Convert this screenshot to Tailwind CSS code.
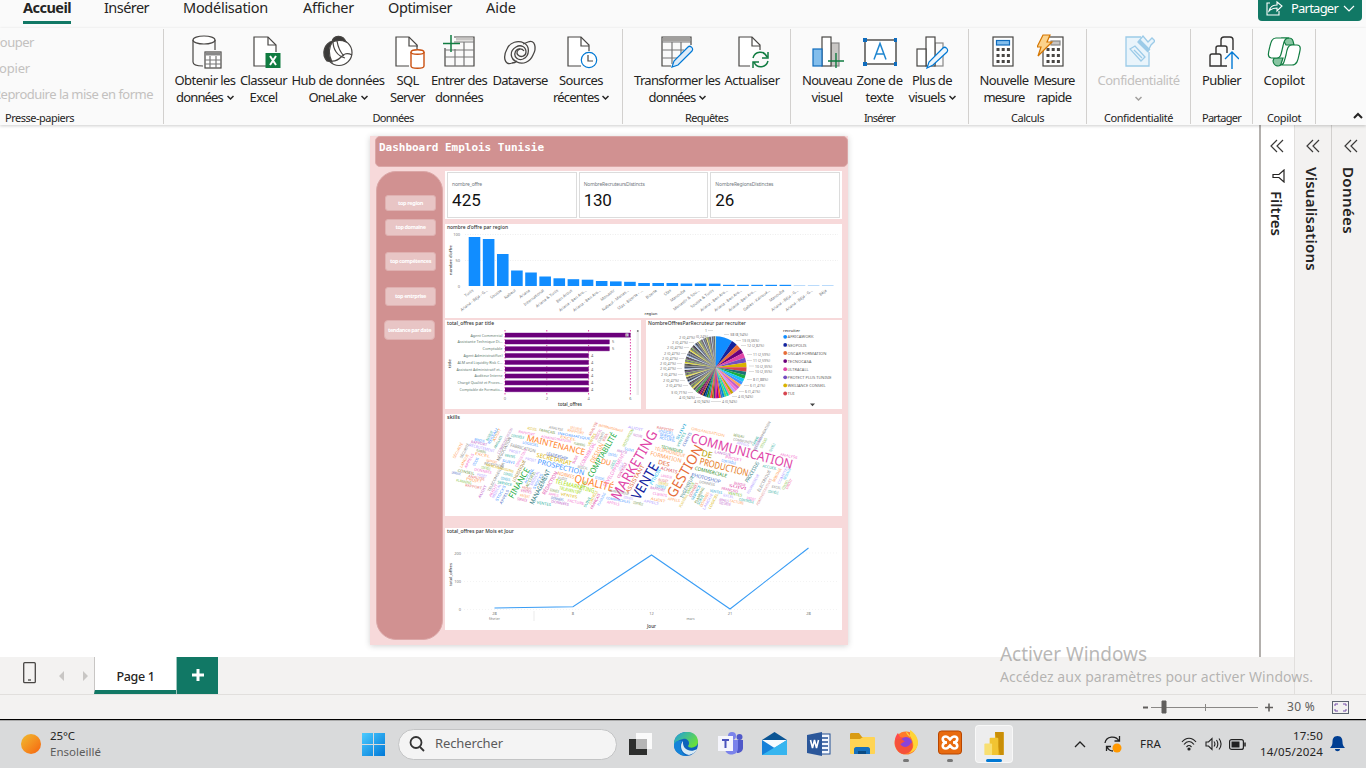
<!DOCTYPE html>
<html lang="fr">
<head>
<meta charset="utf-8">
<title>Dashboard Emplois Tunisie</title>
<script src="https://cdn.jsdelivr.net/npm/@tailwindcss/browser@4"></script>
</head>
<body class="w-[1366px] h-[768px] overflow-hidden bg-white font-['Noto_Sans',sans-serif] text-[#252423]">
<div class="relative flex h-[768px] w-[1366px] flex-col overflow-hidden">

<!-- Ribbon tabs -->
<header class="flex h-7 shrink-0 items-start justify-between bg-[#fafafa]">
  <nav class="flex pl-[23px] text-[14.5px] leading-[18px] whitespace-nowrap">
    <div class="mr-[33px] h-6 w-12 border-b-[3px] border-[#117865] font-bold"><span class="-mt-[2px] block w-fit" data-w="48">Accueil</span></div>
    <div class="mr-[34px] w-[45px]"><span class="-mt-[2px] block w-fit" data-w="45">Insérer</span></div>
    <div class="mr-[35px] w-[85px]"><span class="-mt-[2px] block w-fit" data-w="85">Modélisation</span></div>
    <div class="mr-[34px] w-[51px]"><span class="-mt-[2px] block w-fit" data-w="51">Afficher</span></div>
    <div class="mr-[33px] w-[65px]"><span class="-mt-[2px] block w-fit" data-w="64">Optimiser</span></div>
    <div><span class="-mt-[2px] block w-fit" data-w="30">Aide</span></div>
  </nav>
  <div class="mr-1 flex h-[21px] w-[104px] items-center rounded-b-[4px] bg-[#117865] pb-[5px] pl-2 text-white">
    <svg class="h-4 w-[17px]" viewBox="0 0 17 16" fill="none" stroke="#fff" stroke-width="1.1"><path d="M4 3H1v12h12v-4M3 11c1-4 4-6 8-6V2l5 4-5 5V8c-4 0-6 1-8 3z"/></svg>
    <span class="ml-2 inline-block text-[13px] leading-4" data-w="47">Partager</span>
    <svg class="ml-[5px] h-3 w-3" viewBox="0 0 12 12" fill="none" stroke="#fff" stroke-width="1.2"><path d="M1 4l5 5 5-5"/></svg>
  </div>
</header>

<!-- Ribbon -->
<section class="relative z-10 flex h-[97px] shrink-0 bg-[#fafafa] text-[13px] leading-[17px] whitespace-nowrap shadow-[0_1px_3px_rgba(0,0,0,0.2)]">
  <div class="my-[1px] flex w-[164px] flex-col border-r border-[#d2d0ce] text-[#c3c1bf]">
    <div class="h-[26px] shrink-0 pt-[5px]"><span class="-ml-[8px] inline-block" data-w="42">Couper</span></div>
    <div class="h-[26px] shrink-0 pt-[5px]"><span class="-ml-[9px] inline-block" data-w="39">Copier</span></div>
    <div class="h-[30px] shrink-0 pt-[5px]"><span class="-ml-[7px] inline-block" data-w="160">Reproduire la mise en forme</span></div>
    <div class="pl-[5px] text-[11px] leading-[13px] text-[#252423]"><span class="inline-block" data-w="69">Presse-papiers</span></div>
  </div>

  <div class="my-[1px] flex w-[459px] flex-col border-r border-[#d2d0ce]">
    <div class="flex h-[82px] shrink-0 pt-[5px] pl-2 text-center">
      <div class="flex w-[66px] flex-col items-center">
        <svg class="mb-[3px] h-[35px] w-[34px]" viewBox="0 0 34 35" fill="none" stroke="#484644" stroke-width="1.2"><path d="M5 6v22c0 2 3 4 10 4M27 6v10"/><ellipse cx="16" cy="6" rx="11" ry="4" fill="#fff"/><rect x="17" y="18" width="16" height="16" fill="#fff"/><path d="M17 20h16" stroke="#888" stroke-width="3"/><path d="M17 26h16M17 30h16M22 22v12M28 22v12" stroke="#777"/></svg>
        <span class="inline-block" data-w="61">Obtenir les</span><span class="flex items-center"><span class="inline-block" data-w="47">données</span><svg class="ml-1 size-[7px]" viewBox="0 0 7 7" fill="none" stroke="#252423" stroke-width="1.5"><path d="M.5 2l3 3 3-3"/></svg></span>
      </div>
      <div class="flex w-[51px] flex-col items-center">
        <svg class="mb-[3px] h-[35px] w-[34px]" viewBox="0 0 34 35" fill="none" stroke="#484644" stroke-width="1.2"><path d="M19 32H7V3h14l8 8v7" fill="#fff"/><path d="M21 3v8h8"/><rect x="18.500" y="19" width="15" height="15" fill="#107c41" stroke="none"/><path d="M23 22l6 9M29 22l-6 9" stroke="#fff" stroke-width="2"/></svg>
        <span class="inline-block" data-w="47">Classeur</span><span class="inline-block" data-w="28">Excel</span>
      </div>
      <div class="flex w-[98px] flex-col items-center">
        <svg class="mb-[3px] h-[35px] w-[34px]" viewBox="0 0 34 35" fill="none" stroke="#484644" stroke-width="1.2"><circle cx="18" cy="18.500" r="13" fill="#fff"/><path d="M11 8c1-7 11-8 14 0-4-2-9-2-14 0z" fill="#3b3a39"/><path d="M12 7c-9 2-12 13-6 20l5 1c-4-8-4-14 1-21z" fill="#3b3a39"/><path d="M12 7c0 8 4 15 12 17M16 7c1 6 3 11 7 15M10 27c9 1 10-6 14-7 3-1 5 0 7 1"/></svg>
        <span class="inline-block" data-w="93">Hub de données</span><span class="flex items-center"><span class="inline-block" data-w="48">OneLake</span><svg class="ml-1 size-[7px]" viewBox="0 0 7 7" fill="none" stroke="#252423" stroke-width="1.5"><path d="M.5 2l3 3 3-3"/></svg></span>
      </div>
      <div class="flex w-[41px] flex-col items-center">
        <svg class="mb-[3px] h-[35px] w-[34px]" viewBox="0 0 34 35" fill="none" stroke="#484644" stroke-width="1.2"><path d="M18 32H5V3h13l8 8v4" fill="#fff"/><path d="M18 3v9h9"/><g stroke="#ca5010" stroke-width="1.4"><path d="M20 18v14c0 3 13 3 13 0V18" fill="#fff"/><ellipse cx="26.500" cy="18" rx="6.500" ry="2.300" fill="#fff"/></g></svg>
        <span class="inline-block" data-w="22">SQL</span><span class="inline-block" data-w="35">Server</span>
      </div>
      <div class="flex w-[62px] flex-col items-center">
        <svg class="mb-[3px] h-[35px] w-[34px]" viewBox="0 0 34 35" fill="none" stroke="#484644" stroke-width="1.2"><path d="M3 14v18h29V3H12"/><path d="M14 5h17" stroke="#c8c6c4" stroke-width="3"/><path d="M12 8h20M3 16h29M3 23h29M13 15v17M22 8v24" stroke="#777"/><path d="M9 1v17M1 9.500h17" stroke="#107c41" stroke-width="1.5"/></svg>
        <span class="inline-block" data-w="56">Entrer des</span><span class="inline-block" data-w="48">données</span>
      </div>
      <div class="flex w-[60px] flex-col items-center">
        <svg class="mb-[3px] h-[35px] w-[34px]" viewBox="0 0 34 35" fill="none" stroke="#484644" stroke-width="1.3"><path d="M9 29C1 32 0 22 4 15c3-7 11-9 17-6 6 3 6 13-1 16-5 2-9-2-8-6 1-5 7-5 9-2"/><path d="M25 8c7-3 9 6 5 13-3 7-10 10-16 7C7 25 6 17 13 13c5-3 10 0 10 5 0 4-5 6-8 3-2-2-1-5 2-6"/><path d="M9 29c2 0 4-1 5-2M25 8l-5 2"/></svg>
        <span class="inline-block" data-w="55">Dataverse</span>
      </div>
      <div class="flex w-[62px] flex-col items-center">
        <svg class="mb-[3px] h-[35px] w-[34px]" viewBox="0 0 34 35" fill="none" stroke="#484644" stroke-width="1.2"><path d="M17 32H4V3h13l8 8v6" fill="#fff"/><path d="M17 3v9h8"/><circle cx="25" cy="26" r="7.700" fill="#fff" stroke="#0078d4"/><path d="M24 21v6h5"/></svg>
        <span class="inline-block" data-w="44">Sources</span><span class="flex items-center"><span class="inline-block" data-w="46">récentes</span><svg class="ml-[3px] size-[7px]" viewBox="0 0 7 7" fill="none" stroke="#252423" stroke-width="1.5"><path d="M.5 2l3 3 3-3"/></svg></span>
      </div>
    </div>
    <div class="text-center text-[11px] leading-[13px]"><span class="inline-block" data-w="41">Données</span></div>
  </div>

  <div class="my-[1px] flex w-[168px] flex-col border-r border-[#d2d0ce]">
    <div class="flex h-[82px] shrink-0 pt-[5px] pl-[9px] text-center">
      <div class="flex w-[90px] flex-col items-center">
        <svg class="mb-[3px] h-[35px] w-[34px]" viewBox="0 0 34 35" fill="none" stroke="#484644" stroke-width="1.2"><path d="M11 32H2V3h29v8"/><path d="M3 5.500h27" stroke="#a19f9d" stroke-width="3.500"/><path d="M2 8h29M2 16h22M2 24h16M12 8v22M21 8v12" stroke="#777"/><path d="M12 33l2-6L28 13c2-2 6 1 4 4L18 31z" fill="#deecf9" stroke="#0078d4"/></svg>
        <span class="inline-block" data-w="86">Transformer les</span><span class="flex items-center"><span class="inline-block" data-w="47">données</span><svg class="ml-[3px] size-[7px]" viewBox="0 0 7 7" fill="none" stroke="#252423" stroke-width="1.5"><path d="M.5 2l3 3 3-3"/></svg></span>
      </div>
      <div class="flex w-[60px] flex-col items-center">
        <svg class="mb-[3px] h-[35px] w-[34px]" viewBox="0 0 34 35" fill="none" stroke="#484644" stroke-width="1.2"><path d="M15 32H4V3h13l8 8v5" fill="#fff"/><path d="M17 3v9h8"/><g stroke="#107c41" stroke-width="1.5"><path d="M18 24c2-7 11-8 14-1M33 18v6h-6M33 27c-2 7-11 8-14 1M18 34v-6h6"/></g></svg>
        <span class="inline-block" data-w="55">Actualiser</span>
      </div>
    </div>
    <div class="text-center text-[11px] leading-[13px]"><span class="inline-block" data-w="43">Requêtes</span></div>
  </div>

  <div class="my-[1px] flex w-[178px] flex-col border-r border-[#d2d0ce]">
    <div class="flex h-[82px] shrink-0 pt-[5px] pl-2 text-center">
      <div class="flex w-[56px] flex-col items-center">
        <svg class="mb-[3px] h-[35px] w-[34px]" viewBox="0 0 34 35" fill="none" stroke="#484644" stroke-width="1.2"><rect x="21" y="9" width="8" height="23" fill="#c8c6c4" stroke="#888"/><rect x="12" y="3" width="9" height="29" fill="#fff"/><rect x="3" y="15" width="9" height="17" fill="#83beec" stroke="#0f6cbd"/><path d="M26 19v15M18 27h16" stroke="#107c41" stroke-width="1.400"/></svg>
        <span class="inline-block" data-w="50">Nouveau</span><span class="inline-block" data-w="31">visuel</span>
      </div>
      <div class="flex w-[49px] flex-col items-center">
        <svg class="mb-[3px] h-[35px] w-[34px]" viewBox="0 0 34 35" fill="none" stroke="#484644" stroke-width="1.4"><rect x="2" y="6" width="31" height="24" fill="#fff"/><g fill="#0f6cbd" stroke="none"><path d="M0 4h4v4H0zM31 4h4v4h-4zM0 28h4v4H0zM31 28h4v4h-4z"/></g><path d="M11 25.500l6-16 6 16M13 20h8" stroke="#1f86d0" stroke-width="1.5"/></svg>
        <span class="inline-block" data-w="46">Zone de</span><span class="inline-block" data-w="28">texte</span>
      </div>
      <div class="flex w-[56px] flex-col items-center">
        <svg class="mb-[3px] h-[35px] w-[34px]" viewBox="0 0 34 35" fill="none" stroke="#484644" stroke-width="1.2"><rect x="20" y="9" width="8" height="23" stroke="#888"/><rect x="11" y="3" width="9" height="29" fill="#fff"/><rect x="2" y="15" width="9" height="17" fill="#fff"/><path d="M12 34l2-6L28 14c2-2 6 1 4 4L18 31z" fill="#eef6fc" stroke="#0078d4"/></svg>
        <span class="inline-block" data-w="40">Plus de</span><span class="flex items-center"><span class="inline-block" data-w="37">visuels</span><svg class="ml-[3px] size-[7px]" viewBox="0 0 7 7" fill="none" stroke="#252423" stroke-width="1.5"><path d="M.5 2l3 3 3-3"/></svg></span>
      </div>
    </div>
    <div class="text-center text-[11px] leading-[13px]"><span class="inline-block" data-w="31">Insérer</span></div>
  </div>

  <div class="my-[1px] flex w-[118px] flex-col border-r border-[#d2d0ce]">
    <div class="flex h-[82px] shrink-0 pt-[5px] pl-2 text-center">
      <div class="flex w-[54px] flex-col items-center">
        <svg class="mb-[3px] h-[35px] w-[34px]" viewBox="0 0 34 35" fill="none" stroke="#484644" stroke-width="1.2"><rect x="6" y="3" width="20" height="29" fill="#fff"/><rect x="9.500" y="6.500" width="13" height="4.500" fill="#83beec" stroke="#0f6cbd"/><path d="M9.500 15.500h14M9.500 21.500h14M9.500 27.500h14" stroke-width="3" stroke-dasharray="3 2.200"/></svg>
        <span class="inline-block" data-w="49">Nouvelle</span><span class="inline-block" data-w="41">mesure</span>
      </div>
      <div class="flex w-[46px] flex-col items-center">
        <svg class="mb-[3px] h-[35px] w-[34px]" viewBox="0 0 34 35" fill="none" stroke="#484644" stroke-width="1.2"><rect x="6" y="3" width="20" height="29" fill="#fff"/><rect x="14" y="7" width="9" height="4" fill="#c8c6c4" stroke="#888"/><path d="M9.500 15.500h14M9.500 21.500h14M9.500 27.500h14" stroke-width="3" stroke-dasharray="3 2.200"/><path d="M6 1h7l-3 7h5L1 22l3-9H0z" fill="#fbd28b" stroke="#d47500"/></svg>
        <span class="inline-block" data-w="41">Mesure</span><span class="inline-block" data-w="35">rapide</span>
      </div>
    </div>
    <div class="text-center text-[11px] leading-[13px]"><span class="inline-block" data-w="33">Calculs</span></div>
  </div>

  <div class="my-[1px] flex w-[104px] flex-col items-center border-r border-[#d2d0ce] pt-[5px]">
    <div class="flex h-[77px] shrink-0 flex-col items-center text-[#c3c1bf]">
      <svg class="mb-[3px] h-[35px] w-[34px]" viewBox="0 0 34 35" fill="none" stroke="#9ccbe8" stroke-width="1.3"><path d="M20 3H5v29h23V18" fill="#e9f4fb"/><path d="M9 15l5-3 10 11-4 4zM13 16l8 8" fill="#e9f4fb"/><path d="M17 8l5-6 5 6 4-4 3 3-4 4-3 6z" fill="#e9f4fb"/><path d="M18 7l10 10" stroke-width="4"/></svg>
      <span class="inline-block" data-w="82">Confidentialité</span>
      <svg class="mt-[6px] size-[7px]" viewBox="0 0 7 7" fill="none" stroke="#a19f9d" stroke-width="1.5"><path d="M.5 2l3 3 3-3"/></svg>
    </div>
    <div class="text-[11px] leading-[13px]"><span class="inline-block" data-w="69">Confidentialité</span></div>
  </div>

  <div class="my-[1px] flex w-[62px] flex-col items-center border-r border-[#d2d0ce] pt-[5px]">
    <div class="flex h-[77px] shrink-0 flex-col items-center">
      <svg class="mb-[3px] h-[35px] w-[34px]" viewBox="0 0 34 35" fill="none" stroke="#323130" stroke-width="1.4"><path d="M22 32H5V22c0-1 1-2 2-2h7c1 0 2 1 2 2v10"/><path d="M11 20v-6c0-2 1-2 2-2h7c2 0 2 1 2 2v5M16 12V6c0-2 1-3 3-3h6c2 0 3 1 3 3v10"/><path d="M27 35V19M20 25l7-7 7 7" stroke="#0078d4"/></svg>
      <span class="inline-block" data-w="39">Publier</span>
    </div>
    <div class="text-[11px] leading-[13px]"><span class="inline-block" data-w="39">Partager</span></div>
  </div>

  <div class="my-[1px] flex w-[63px] flex-col items-center border-r border-[#d2d0ce] pt-[5px]">
    <div class="flex h-[77px] shrink-0 flex-col items-center">
      <svg class="mb-[3px] h-[35px] w-[34px]" viewBox="0 0 34 35" fill="none" stroke="#107c41" stroke-width="1.2"><path d="M15 4h7c4 0 4 3 5 7h-8z" fill="#88c5a2"/><path d="M7 24h9l-2 6c-1 3-7 3-8-3z" fill="#88c5a2"/><path d="M20 4H9C5 4 4 8 3 12c-1 5-4 12 2 12h5c4 0 4-4 6-12 1-5 2-8 6-8z" fill="#fff"/><path d="M13 31h12c5 0 6-5 7-10 1-4 3-10-2-10h-5c-4 0-5 4-6 10-2 7-2 10-6 10z" fill="#fff"/></svg>
      <span class="inline-block" data-w="41">Copilot</span>
    </div>
    <div class="text-[11px] leading-[13px]"><span class="inline-block" data-w="34">Copilot</span></div>
  </div>
  <div class="flex flex-1 items-end justify-end pr-[3px] pb-[5px]">
    <svg class="h-[9px] w-[10px]" viewBox="0 0 10 9" fill="none" stroke="#252423" stroke-width="2"><path d="M1 7l4-4 4 4"/></svg>
  </div>
</section>

<!-- Work area -->
<section class="flex h-[569px] shrink-0">
  <div class="flex w-[1294px] flex-col">
    <div class="flex h-[532px] shrink-0">
      <main class="flex-1 pt-[11px] pl-[370px]">
        <!-- Report page -->
        <div class="h-[509px] w-[478px] bg-[#f7d9da] shadow-[0_1px_6px_rgba(0,0,0,0.18)]">
          <div class="ml-[5px] h-[31px] rounded-[5px] border border-[#dba7a7] bg-[#d19191] pt-[3px] pl-[3px] font-['DejaVu_Sans_Mono',monospace] text-[11px] leading-[15px] font-bold text-white"><span class="inline-block" data-w="165">Dashboard Emplois Tunisie</span></div>
          <div class="mt-1 flex">
            <aside class="ml-[6px] flex h-[469px] w-[67px] flex-col items-center rounded-[20px] border border-[#dba7a7] bg-[#d19191] pt-[23px] pl-[2px] text-[5.500px] font-bold whitespace-nowrap text-white">
              <div class="flex h-4 w-[51px] items-center justify-center rounded-[3px] border border-[#dfb1b1] bg-[#e8c5c5]"><span class="inline-block" data-w="25">top region</span></div>
              <div class="mt-2 flex h-[17px] w-[51px] items-center justify-center rounded-[3px] border border-[#dfb1b1] bg-[#e8c5c5]"><span class="inline-block" data-w="30">top domaine</span></div>
              <div class="mt-4 flex h-[19px] w-[51px] items-center justify-center rounded-[3px] border border-[#dfb1b1] bg-[#e8c5c5]"><span class="inline-block" data-w="41">top compétences</span></div>
              <div class="mt-4 flex h-[19px] w-[51px] items-center justify-center rounded-[3px] border border-[#dfb1b1] bg-[#e8c5c5]"><span class="inline-block" data-w="31">top entrprise</span></div>
              <div class="mt-[14px] mr-[2px] flex h-5 w-[51px] items-center justify-center rounded-[4px] border border-[#dfb1b1] bg-[#e8c5c5]"><span class="inline-block" data-w="43">tendance par date</span></div>
            </aside>
            <div class="ml-[2px] w-[397px]">
              <div class="flex h-[48px] gap-[2px] bg-white py-[1px] pr-[2px] pl-[2px] whitespace-nowrap">
                <div class="flex-1 border border-[#dcdcdc] pl-1"><div class="mt-[8px] text-[5px] leading-[7px] text-[#71787e]"><span class="block w-fit" data-w="30">nombre_offre</span></div><div class="mt-[3px] font-[Roboto,sans-serif] text-[17px] leading-[19px] text-[#111]"><span class="block w-fit" data-w="29">425</span></div></div>
                <div class="flex-1 border border-[#dcdcdc] pl-1"><div class="mt-[8px] text-[5px] leading-[7px] text-[#71787e]"><span class="block w-fit" data-w="61">NombreRecruteursDistincts</span></div><div class="mt-[3px] font-[Roboto,sans-serif] text-[17px] leading-[19px] text-[#111]"><span class="block w-fit" data-w="28">130</span></div></div>
                <div class="flex-1 border border-[#dcdcdc] pl-1"><div class="mt-[8px] text-[5px] leading-[7px] text-[#71787e]"><span class="block w-fit" data-w="58">NombreRegionsDistinctes</span></div><div class="mt-[3px] font-[Roboto,sans-serif] text-[17px] leading-[19px] text-[#111]"><span class="block w-fit" data-w="19">26</span></div></div>
              </div>
              <svg id="regions" class="mt-[5px] h-[94px] w-[397px] bg-white" viewBox="445 224 397 94"></svg>
              <div class="mt-[2px] flex justify-between">
                <svg id="titles" class="h-[89px] w-[196px] bg-white" viewBox="445 320 196 89"></svg>
                <svg id="recruiters" class="h-[89px] w-[196px] bg-white" viewBox="646 320 196 89"></svg>
              </div>
              <svg id="skills" class="mt-[5px] h-[102px] w-[397px] bg-white" viewBox="445 414 397 102"></svg>
              <svg id="days" class="mt-3 h-[102px] w-[397px] bg-white" viewBox="445 528 397 102"></svg>
            </div>
          </div>
        </div>
      </main>
      <aside class="flex w-[35px] flex-col items-center border-l-2 border-[#b3b0ad] bg-white">
        <svg class="mt-[14px] mr-[2px] h-[14px] w-[14px]" viewBox="0 0 14 14" fill="none" stroke="#3b3a39" stroke-width="1.2"><path d="M7 1L1 7l6 6M13 1L7 7l6 6"/></svg>
        <svg class="mt-4 ml-[2px] h-[14px] w-[13px]" viewBox="0 0 13 14" fill="none" stroke="#252423" stroke-width="1.2"><path d="M12 1v12L7 8.500H1v-3h6z"/></svg>
        <span class="mt-[8px] mr-[2px] text-[15px] leading-5 font-semibold [writing-mode:vertical-rl]" data-h="45">Filtres</span>
      </aside>
    </div>
    <div class="flex h-[37px] shrink-0 bg-[#f3f2f1]">
      <svg class="mt-[5px] ml-[23px] h-[22px] w-[13px]" viewBox="0 0 13 22" fill="none" stroke="#484644" stroke-width="1.3"><rect x=".7" y=".7" width="11.600" height="20" rx="1"/><path d="M5 18h3"/></svg>
      <svg class="mt-[14px] ml-[23px] h-[10px] w-[29px]" viewBox="0 0 29 10" fill="#c8c6c4"><path d="M5 0v10L0 5zM24 0v10l5-5z"/></svg>
      <div class="ml-[6px] flex h-[37px] w-[82px] justify-center border-b-4 border-l border-[#117865] border-l-[#c8c6c4] bg-white pt-[10px] text-[12.500px] leading-[20px] font-medium"><span class="inline-block" data-w="38">Page 1</span></div>
      <div class="flex h-[37px] w-[42px] items-center justify-center border-l border-[#9cc6bd] bg-[#117865]"><svg class="mb-[2px] h-[12px] w-[12px]" viewBox="0 0 12 12" stroke="#fff" stroke-width="3"><path d="M6 0v12M0 6h12"/></svg></div>
    </div>
  </div>
  <aside class="flex w-[37px] flex-col items-center border-l border-[#e1dfdd] bg-[#f3f2f1]">
    <svg class="mt-[14px] h-[14px] w-[14px]" viewBox="0 0 14 14" fill="none" stroke="#3b3a39" stroke-width="1.2"><path d="M7 1L1 7l6 6M13 1L7 7l6 6"/></svg>
    <span class="mt-[14px] mr-[3px] text-[15px] leading-5 font-semibold [writing-mode:vertical-rl]" data-h="104">Visualisations</span>
  </aside>
  <aside class="flex w-[35px] flex-col items-center border-l border-[#d2d0ce] bg-[#f3f2f1]">
    <svg class="mt-[14px] ml-[3px] h-[14px] w-[14px]" viewBox="0 0 14 14" fill="none" stroke="#3b3a39" stroke-width="1.2"><path d="M7 1L1 7l6 6M13 1L7 7l6 6"/></svg>
    <span class="mt-[14px] text-[15px] leading-5 font-semibold [writing-mode:vertical-rl]" data-h="67">Données</span>
  </aside>
</section>

<!-- Status bar -->
<section class="flex h-[25px] shrink-0 items-center justify-end border-t border-[#e1dfdd] bg-[#f3f2f1] pr-[17px] text-[12px] text-[#605e5c]">
  <svg class="h-[14px] w-[132px]" viewBox="0 0 132 14" stroke="#605e5c"><path d="M1 7.500h5" stroke-width="2"/><path d="M9 7.500h107" stroke="#8a8886"/><path d="M20 1h4v12h-4z" fill="#605e5c"/><path d="M63.500 4v7" stroke="#8a8886"/><path d="M123 7.500h8M127 3.500v8" stroke-width="1.600"/></svg>
  <span class="ml-[13px] inline-block" data-w="28">30 %</span>
  <svg class="ml-[17px] h-[13px] w-[17px]" viewBox="0 0 17 13" fill="none" stroke="#5c6470"><rect x=".5" y=".5" width="16" height="12"/><path d="M3 5V3h3M11 3h3v2M14 8v2h-3M6 10H3V8" stroke="#744da9"/></svg>
</section>

<!-- Taskbar -->
<footer class="flex h-[49px] shrink-0 items-center border-t border-black bg-[#d9dadb] shadow-[inset_0_1px_0_#aaa]">
  <div class="ml-[21px] size-5 rounded-full bg-linear-to-br from-[#eebb30] to-[#f5600c]"></div>
  <div class="ml-[9px] w-[312px] text-[11.500px] leading-[16px]"><span class="block w-fit" data-w="25">25°C</span><span class="block w-fit text-[#5c5c5c]" data-w="51">Ensoleillé</span></div>
  <svg class="h-[23px] w-[23px]" viewBox="0 0 23 23"><defs><linearGradient id="win" x2="1" y2="1"><stop stop-color="#4ccbff"/><stop offset="1" stop-color="#0078d7"/></linearGradient></defs><path d="M0 0h11v11H0zM12 0h11v11H12zM0 12h11v11H0zM12 12h11v11H12z" fill="url(#win)"/></svg>
  <div class="ml-[13px] flex h-[31px] w-[219px] items-center rounded-full border border-[#c3c4c5] bg-[#f4f4f4] pl-[10px] text-[13px] text-[#5b5b5b]">
    <svg class="h-[16px] w-[16px]" viewBox="0 0 16 16" fill="none" stroke="#333" stroke-width="1.800"><circle cx="7" cy="6.500" r="5.500"/><path d="M11 11l4 4"/></svg>
    <span class="ml-[10px] inline-block" data-w="68">Rechercher</span>
  </div>
  <svg class="ml-[12px] h-[24px] w-[24px]" viewBox="0 0 24 24"><rect x="0" y="7" width="18" height="16" fill="#2d2e2d"/><rect x="7" y="1" width="16" height="16" fill="#fafafa"/><rect x="7" y="7" width="11" height="10" fill="#b5b5b5"/></svg>
  <svg class="ml-[21px] h-[24px] w-[24px]" viewBox="0 0 24 24"><defs><linearGradient id="edge" x2="1" y2=".6"><stop stop-color="#1d9ce5"/><stop offset="1" stop-color="#68e03a"/></linearGradient></defs><circle cx="12" cy="12" r="12" fill="#0d62bb"/><path d="M0 10C2-3 24-4 24 10c0 6-9 7-10 4 3-4-1-8-5-7C4 8 1 11 0 15z" fill="url(#edge)"/><path d="M9 9c-4 4-2 13 6 14 4-1 7-3 8-6-6 4-15 1-14-8z" fill="#d9eaf5"/><path d="M8 9c-3 4-2 13 6 15C4 24-1 18 0 12c2-4 6-4 8-3z" fill="#1583d8"/></svg>
  <svg class="ml-5 h-[24px] w-[25px]" viewBox="0 0 25 24"><circle cx="14" cy="4" r="4" fill="#7b83eb"/><circle cx="21.500" cy="5" r="3" fill="#5059c9"/><path d="M14 8h11v8c0 3-3 5-6 5z" fill="#5059c9"/><path d="M7 8h13v8c0 9-13 8-13 1z" fill="#7b83eb"/><rect x="0" y="4" width="15" height="15" fill="#f5f5fc"/><path d="M4 8h7M7.500 8v8" stroke="#4b53bc" stroke-width="2"/></svg>
  <svg class="ml-[19px] h-[24px] w-[25px]" viewBox="0 0 25 24"><path d="M0 8l12.500-8L25 8z" fill="#0b5594"/><path d="M0 8h25L12.500 18z" fill="#f7fbff"/><path d="M0 8v15h25V8L12.500 16z" fill="#1681d9"/><path d="M0 23h25V8z" fill="#36b5ef"/><path d="M3 8h19l-9.500 7z" fill="#f7fbff"/></svg>
  <svg class="ml-5 h-[24px] w-[24px]" viewBox="0 0 24 24"><rect x="12" y="2" width="11" height="20" fill="#f3f7fd" stroke="#234f94"/><path d="M13 6h8M13 10h8M13 14h8M13 18h8" stroke="#234f94" stroke-width="1.300"/><path d="M0 3l15-3v24L0 21z" fill="#2b579a"/><path d="M3.500 8l2 8 2-8 2 8 2-8" stroke="#fff" stroke-width="1.600" fill="none"/></svg>
  <svg class="ml-[19px] h-[24px] w-[25px]" viewBox="0 0 25 24"><path d="M0 2c0-1 1-1 2-1h7l3 4h12v9H0z" fill="#d99b12"/><path d="M0 7h10l3-2h11c1 0 1 1 1 1v15c0 1-1 1-1 1H1c-1 0-1-1-1-1z" fill="#ffd454"/><path d="M4 22v-5c0-1 1-2 2-2h12c1 0 2 1 2 2v5z" fill="#1670bd"/><path d="M8 22v-3h8v3z" fill="#0a4b84"/></svg>
  <svg class="ml-[19px] mt-[4px] h-[38px] w-[24px]" viewBox="0 0 24 38"><circle cx="12" cy="16" r="11.500" fill="#ff7a2c"/><path d="M12 4c0 2 1 4 4 6V3c8 5 10 13 6 19-4 4-7 4-7 4 7-6 5-13-3-22z" fill="#ffd436"/><path d="M1 14c0-5 3-8 3-8l2 4 6 1c6 4 6 13-1 15C5 27 0 20 1 14z" fill="#ff4b4b"/><circle cx="12" cy="16" r="6" fill="#8a43d8"/><path d="M2 12c4-1 7 0 9 3-3 0-3 2-5 2 4 5 10 3 11-2 5 7-3 12-7 12C4 27 0 20 2 12z" fill="#f5513a"/><rect x="9" y="32" width="6" height="3" rx="1.500" fill="#777"/></svg>
  <svg class="ml-5 mt-[4px] h-[38px] w-[24px]" viewBox="0 0 24 38"><rect x=".5" y="4" width="23" height="23" rx="3" fill="#e86b10" stroke="#b84600"/><path d="M8 9.500c-5 0-4 6 1 6-5 0-6 6-1 6 2 0 3-2 4-3 1 1 2 3 4 3 5 0 4-6-1-6 5 0 6-6 1-6-2 0-3 2-4 3-1-1-2-3-4-3z" fill="none" stroke="#fff" stroke-width="2.600"/><rect x="9" y="32" width="6" height="3" rx="1.500" fill="#777"/></svg>
  <div class="ml-[13px] flex h-[38px] w-[38px] flex-col items-center rounded-[4px] border border-white/60 bg-[#ededee]">
    <svg class="mt-[6px] h-[24px] w-[20px]" viewBox="0 0 20 24"><rect x="11" y="0" width="9" height="24" rx="1" fill="#e5ad16"/><path d="M11 0h9v24h-4z" fill="#c98e07"/><rect x="5.500" y="6" width="9" height="18" rx="1" fill="#f1c432"/><rect x="0" y="12" width="8" height="12" rx="1" fill="#f8df72"/></svg>
    <div class="mt-[4px] h-[3px] w-4 rounded-full bg-[#0078d4]"></div>
  </div>
  <svg class="ml-[61px] h-[9px] w-[12px]" viewBox="0 0 12 9" fill="none" stroke="#222" stroke-width="1.300"><path d="M1 7l5-5 5 5"/></svg>
  <svg class="ml-[18px] h-[18px] w-[18px]" viewBox="0 0 18 18" fill="none" stroke="#222" stroke-width="1.300"><path d="M1 8c1-7 11-8 14-2M15.500 1v5h-5M9 16c-3 0-5-2-6-4M2.500 16v-4.500H7"/><circle cx="13" cy="13" r="4.500" fill="#ff9800" stroke="none"/></svg>
  <div class="ml-[18px] w-[21px] text-[11.500px]"><span class="block w-fit" data-w="21">FRA</span></div>
  <svg class="ml-[20px] h-[14px] w-[16px]" viewBox="0 0 16 14" fill="none" stroke="#222" stroke-width="1.200"><path d="M1 5c4-5 10-5 14 0M3 7.500c3-4 7-4 10 0M5.500 10c2-2 3-2 5 0"/><circle cx="8" cy="12" r="1" fill="#222"/></svg>
  <svg class="ml-[8px] h-[14px] w-[17px]" viewBox="0 0 17 14" fill="none" stroke="#222" stroke-width="1.100"><path d="M1 5h2.500L7 1.500v11L3.500 9H1zM9 4.500c1.500 2 1.500 3 0 5M11.500 3c2 3 2 5 0 8M14 1.500c3 4 3 7 0 11"/></svg>
  <svg class="ml-[7px] h-[11px] w-[17px]" viewBox="0 0 17 11"><rect x=".6" y=".6" width="13.800" height="9.800" rx="2" fill="none" stroke="#222" stroke-width="1.200"/><rect x="2.500" y="2.500" width="8" height="6" fill="#222"/><path d="M16 3.500v4" stroke="#222" stroke-width="1.500"/></svg>
  <div class="ml-auto flex w-[63px] flex-col items-end text-[11.500px] leading-[16px]"><span class="inline-block" data-w="30">17:50</span><span class="inline-block" data-w="63">14/05/2024</span></div>
  <svg class="mr-[21px] ml-[7px] h-[16px] w-[15px]" viewBox="0 0 15 16" fill="#003e92"><path d="M7.500 0c-4 0-5 3-5 6 0 3-1 4-2.500 6h15c-1.500-2-2.500-3-2.500-6 0-3-1-6-5-6zM5 13h5c0 3-5 3-5 0z"/></svg>
</footer>

<!-- Activation notice floating above the windows -->
<div class="pointer-events-none absolute top-[641px] left-[1000px] z-20 whitespace-nowrap text-[#8a8886]/60">
  <div class="text-[19px] leading-[26px]"><span class="block w-fit" data-w="147">Activer Windows</span></div>
  <div class="text-[14px] leading-[19px]"><span class="block w-fit" data-w="313">Accédez aux paramètres pour activer Windows.</span></div>
</div>
</div>

<script>
const esc = s => s.replace(/&/g, '&amp;');
// Text: x, y baseline, string, size, colour, anchor, rotation, width, weight
function T(x, y, s, size = 4, fill = '#777', a = 'start', r = 0, w = 0, b = 400) {
  return `<text x="${x}" y="${y}" font-size="${size}" fill="${fill}" font-weight="${b}" text-anchor="${a}"${r ? ` transform="rotate(${r} ${x} ${y})"` : ''}${w ? ` textLength="${w}" lengthAdjust="spacingAndGlyphs"` : ''}>${esc(s)}</text>`;
}
const R = (x, y, w, h, f) => `<rect x="${x}" y="${y}" width="${w}" height="${h}" fill="${f}"/>`;
const L = (x1, y1, x2, y2, c, d = '', w = 0.6) => `<line x1="${x1}" y1="${y1}" x2="${x2}" y2="${y2}" stroke="${c}" stroke-width="${w}"${d ? ` stroke-dasharray="${d}"` : ''}/>`;
const put = (id, s) => document.getElementById(id).innerHTML = s;

// Offers by region
{
  const v = [49,47,32,15.5,13.5,9.5,7.7,6.8,6.3,5,4.6,4.2,3,3,3,2.5,2.5,2.4,1.2,1.2,1.2,1.2,1.2,.8,.8,.8];
  const n = ['Tunis','Ariana - Béja - G...','Sousse','Nabeul','Ariana','International','Ariana & Tunis','Ben Arous','Ariana - Ben Aro...','Ariana - Ben Aro...','Monastir','Nabeul - Monas...','Sfax - Bizerte - ...','Bizerte','Sfax','Manouba','Monastir & Sou...','Sousse & Tunis','Ariana - Ben Aro...','Ariana - Ben Aro...','Ariana - Ben Aro...','Gabès - Kairoua...','Manouba','Ariana - Béja - G...','Ariana - Béja - G...','Béja'];
  let s = T(447, 229, "nombre d'offre par region", 5.2, '#333', 'start', 0, 61, 500);
  s += L(465, 234.500, 838, 234.500, '#e3e3e3', '1 1.5') + L(465, 260.500, 838, 260.500, '#e3e3e3', '1 1.5');
  s += T(460, 236, '100', 4, '#777', 'end') + T(460, 262, '50', 4, '#777', 'end') + T(460, 288, '0', 4, '#777', 'end');
  s += T(451.5, 275, "nombre d'offre", 4.2, '#444', 'start', -90, 30, 500) + T(651, 315, 'region', 4.2, '#444', 'middle', 0, 13, 500);
  n.forEach((t, i) => {
    const x = 468.7 + i * 14.13, c = i > 22 ? '#a9d3fb' : '#118dff';
    s += R(x, 286 - v[i], 11.6, v[i], c) + T(x + 5, 291, t, 4, '#6f7478', 'end', -38);
  });
  put('regions', s);
}

// Offers by title
{
  const d = [['Agent Commercial',6],['Assistante Technique Di...',5],['Comptable',5],['Agent Administratif(ve)',4],['ALM and Liquidity Risk C...',4],['Assistant Administratif et...',4],['Auditeur Interne',4],['Chargé Qualité et Proces...',4],['Comptable de Formatio...',4]];
  const w = [32,45,20,39,45,46,28,45,43];
  let s = T(447, 325, 'total_offres par title', 5.2, '#333', 'start', 0, 47, 500);
  s += R(636.5, 330, 2.5, 65, '#ededed') + R(637, 330, 1.5, 2, '#888');
  [0,2,4,6].forEach(k => { const x = 505 + k * 20.9; s += L(x, 330, x, 395, '#e044a7', '1.5 1.5', 1) + T(x, 400, String(k), 4, '#777', 'middle'); });
  d.forEach(([t, k], i) => {
    const y = 332.5 + i * 6.82;
    s += R(505, y, k * 20.9, 5.2, '#c49bd0') + R(505, y + .5, k * 20.9, 4.2, '#6b007b');
    s += T(502.5, y + 4, t, 4, '#5d7a70', 'end', 0, w[i]);
    s += k == 6 ? R(625.5, y + 1, 3, 3, '#eee') + T(626, y + 4, '6', 3.6, '#444') : T(505 + k * 20.9 + 2.5, y + 4, String(k), 4, '#666');
  });
  s += T(451, 368, 'title', 4.2, '#333', 'start', -90, 9, 500) + T(570, 406, 'total_offres', 4.4, '#333', 'middle', 0, 24, 500);
  put('titles', s);
}

// Offers by recruiter
{
  const cx = 715.5, cy = 367.3, r = 31;
  const col = ['#118dff','#12239e','#e66c37','#6b007b','#e044a7','#744ec2','#d9b300','#d64550','#197278','#1aab40','#15c6f4','#4092ff','#ffa058','#be5dc9','#f472d0','#b5a1ff','#c4a200','#ff8080','#00dbbc','#5bd667','#0091d5','#4668c5','#ff6300','#99008a','#ec008c','#533285','#99700a','#ff4141','#1f9a85','#25891c','#0057a2','#002050','#c94f0f','#450f54','#b60064','#34124f','#6a5a29','#1aab40'];
  const sizes = [38,13,12,11,11,11,10,10,8,8,8,7,6,6,6,6,6,5,5,5,5,4,4,4,4,4,4,4,4,4,4,4,3,3,3,3,3,3];
  const dark = ['#555','#c9c400','#333','#8b8fa3','#1b2a4a','#d5dbe8','#444','#7dbe3a','#6b6b6b','#e9e27a','#3b3a39','#4a4a4a','#8aa3d0','#222','#5b2b83'];
  let used = sizes.reduce((a, b) => a + b, 0);
  while (used < 424) { const k = used > 380 ? 1.3 : 2; sizes.push(k); used += k; }
  const total = sizes.reduce((a, b) => a + b, 0);
  let a = 0, s = T(648, 325, 'NombreOffresParRecruteur par recruiter', 5.2, '#333', 'start', 0, 98, 500);
  sizes.forEach((k, i) => {
    const b = a + k / total * 2 * Math.PI, p = t => (cx + r * Math.sin(t)).toFixed(2) + ' ' + (cy - r * Math.cos(t)).toFixed(2);
    s += `<path d="M${cx} ${cy}L${p(a)}A${r} ${r} 0 0 1 ${p(b)}Z" fill="${i < col.length ? col[i] : dark[i * 7 % dark.length]}"/>`;
    a = b;
  });
  [[730,336,'38 (8,94%)',18],[742,342,'13 (3,06%)',17],[747,347,'12 (2,82%)',17],[753,356,'11 (2,59%)',17],[753,362,'11 (2,59%)',17],[755,367.5,'10 (2,35%)',17],[755,373,'10 (2,35%)',17],[753,381,'8 (1,88%)',15],[750,387,'6 (1,41%)',15],[745,393,'6 (1,41%)',15],[738,398,'4 (0,94%)',15],[722,403,'4 (0,94%)',15]].forEach(q => s += T(q[0], q[1], q[2], 4, '#777', 'start', 0, q[3]) + L(q[0] - 6, q[1] - 1.5, q[0] - 1, q[1] - 1.5, '#bbb', '', .5));
  [[707,332,'1',2],[708,337.5,'(0,24%)',12],[695,339,'2 (0,47%)',16],[688,344,'2 (0,47%)',16],[683,349,'2 (0,47%)',16],[680,355,'2 (0,47%)',16],[678,360,'2 (0,47%)',16],[676,365,'2 (0,47%)',16],[676,370,'2 (0,47%)',16],[677,376,'2 (0,47%)',16],[679,382,'2 (0,47%)',16],[682,387,'2 (0,47%)',16],[687,394,'3 (0,71%)',16],[695,399,'4 (0,94%)',16],[710,403,'4 (0,94%)',16]].forEach((q, i) => s += T(q[0], q[1], q[2], 4, '#777', 'end', 0, q[3]) + (i == 1 || i == 2 ? '' : L(q[0] + 1, q[1] - 1.5, q[0] + 6, q[1] - 1.5, '#bbb', '', .5)));
  s += T(783, 332, 'recruiter', 4.2, '#444', 'start', 0, 17, 500);
  [['AFRICAWORK',26],['NEOPOLIS',19],['OSCAR FORMATION',39],['TECNOCASA',24],['ULTRACALL',21],['PROTECT PLUS TUNISIE',44],['WEILIANCE CONSEIL',38],['TUI',7]].forEach((q, i) => s += `<circle cx="785.200" cy="${336.8 + i * 8.1}" r="1.900" fill="${col[i]}"/>` + T(787.5, 338.4 + i * 8.1, q[0], 4.2, '#666', 'start', 0, q[1]));
  s += '<path d="M810 403.500h5l-2.500 2.700z" fill="#444"/>';
  put('recruiters', s);
}

// Skills word cloud: text, centre x, centre y, length, angle, size, colour
{
  const W = [
    ['COMMUNICATION',742,451,105,15,13,'#e044a7'],['MARKETING',634,465,78,-60,14,'#e044a7'],['GESTION',685,471,58,-60,14,'#e66c37'],['VENTE',645,481,40,-60,14,'#12239e'],
    ['MAINTENANCE',556,445,60,14,8.500,'#ff7f2a'],['QUALITÉ',594,483,40,14,10.500,'#ff7f2a'],['PROSPECTION',561,467,48,14,7,'#4092ff'],['SECRÉTARIAT',554,459,36,14,6,'#d9b300'],['FINANCE',519,483,34,-60,8.500,'#1aab40'],['COMPTABILITÉ',602,455,50,-60,8,'#1aab40'],['MANAGEMENT',540,487,38,-63,6.500,'#197278'],['TÉLÉMARKETING',575,486,40,14,6,'#a4e000'],['PRODUCTION',724,467,50,14,9.500,'#e67a20'],['DE',707,454,11,14,8.500,'#b5a100'],['DU',606,462,10,14,7.500,'#ff7f2a'],['DES',664,463,12,14,6,'#e66c37'],['FORMATION',666,457,32,14,5.500,'#ffa058'],['COMMERCIALE',711,472,33,14,5,'#25891c'],['PHOTOSHOP',706,478,30,14,5,'#4668c5'],['ASSISTANT',635,479,32,-60,5.500,'#e66c37'],['DESIGN',597,453,22,-60,6,'#ffa058'],['COMMERCIAL',588,454,26,-60,5,'#f472d0'],['RÉDACTION',550,483,26,-60,5,'#e044a7'],['LEADERSHIP',557,456,22,14,4.500,'#4668c5'],['NORMES',566,475,17,14,5,'#ffa058'],['TELEVENTE',569,490,20,14,4.500,'#a4e000'],['PYTHON',655,477,17,-60,5,'#15c6f4'],['TÉLÉPHONIQUE',670,452,31,14,4.500,'#ffa058'],['ACHATS',669,470,17,14,4.500,'#d64550'],['TECHNIQUES',672,449,22,14,4,'#25891c'],['PROCESSUS',752,472,23,-60,5,'#197278'],['DÉVELOPPEMENT',614,470,38,-60,5,'#f472d0'],['INGÉNIEUR',687,487,24,-62,4.500,'#197278'],['AUTOCAD',582,487,14,-62,4,'#7db500'],
    ['NÉGOCIATION',504,449,26,-62,4.500,'#777777'],['RECRUTEMENT',482,448,26,14,4,'#b5a1ff'],['FABRICATION',523,448,26,14,4.500,'#888888'],['RÉCEPTION',494,465,20,10,4,'#888888'],['COMMUNICATION',505,441,29,-62,3.600,'#be8dc9'],['ANGLAIS',498,442,14,-62,3.500,'#1f9a85'],['TELECONSEILLER',496,477,32,-62,3.600,'#888888'],['LOGISTIQUE',519,471,24,-62,4,'#99700a'],['CONSULTING',521,458,20,-62,3.800,'#f472d0'],['MERCHANDISING',500,468,28,14,3.400,'#d9b300'],
    ['INFORMATIQUE',574,436,33,10,3.300,'#4092ff'],['ADMINISTRATION',556,439,30,10,3.300,'#f472d0'],['INTERNATIONALE',611,428,25,14,3.300,'#ff9040'],['MOTIVATION',628,438,20,-62,4,'#a4d05a'],['COMMERCIALES',618,500,24,10,3.300,'#4092ff'],['BUREAUTIQUE',619,492,20,10,3.300,'#777777'],['ORGANISATION',708,432,34,12,3.800,'#ffb072'],['COMMUNITY',743,441,20,10,3.500,'#888888'],['RECOMMANDATION',762,436,33,-62,3.600,'#888888'],['MÉTHODES',758,443,14,-62,3.500,'#be9dff'],['ADMINISTRATIVES',764,492,30,-62,3.600,'#e59ca0'],['COMPTES',783,475,20,-62,3.600,'#b5a1ff'],['MONTAGE',777,475,15,-62,4,'#ffa058'],['ÉLECTRIQUE',764,481,24,-62,4,'#888888'],['FOURNISSEUR',753,484,22,-62,3.800,'#b5a1ff'],['DROIT',789,484,11,-62,3.500,'#f472a0'],['RÉSEAUX',787,474,13,-62,3.500,'#4cc6f4']
  ];
  // Small words that fill the cloud's rows
  const words = ['CLIENTS','SUIVI','EXCEL','STOCKS','AUDIT','VENTES','PROJET','ACCUEIL','LANGUE','SERVICE','DONNÉES','RÉSEAU','FACTURE','CONTRÔLE','ANALYSE','FRANÇAIS','APPELS','CONSEIL','SÉCURITÉ','BANQUE','MÉDICAL','LOGICIEL','RAPPORT','PLANNING'];
  const pal = ['#f472d0','#4092ff','#ffa058','#7dbe3a','#b5a1ff','#d9b300','#e66c6c','#1aab9a','#888888','#15a6d4','#be5dc9','#e044a7','#4668c5','#6b8f3a'];
  const placed = W.map(w => [w[1], w[2], w[3], w[4], w[5]]);
  // Points along a word's centre line, used to keep words apart
  const pts = (x, y, len, ang) => { const t = ang * Math.PI / 180, o = []; for (let k = -2; k <= 2; k++) o.push([x + Math.cos(t) * len * k / 4, y + Math.sin(t) * len * k / 4]); return o; };
  const free = (x, y, len, ang) => pts(x, y, len, ang).every(([px, py]) => placed.every(w => {
    const t = w[3] * Math.PI / 180, dx = px - w[0], dy = py - w[1];
    return Math.abs(dx * Math.cos(t) + dy * Math.sin(t)) > w[2] / 2 + 1 || Math.abs(-dx * Math.sin(t) + dy * Math.cos(t)) > w[4] * .37 + 1.5;
  }));
  let seed = 7; const rnd = () => (seed = seed * 16807 % 2147483647) / 2147483647;
  for (let i = 0, n = 0; i < 9000 && n < 210; i++) {
    const x = 456 + rnd() * 334, y = 428 + rnd() * 76;
    const e = Math.abs((x - 622) / 174), half = 40 * Math.sqrt(Math.max(0, 1 - e * e * e));
    if (Math.abs(y - 467 - (x - 620) * .015) > half) continue;
    const up = (Math.floor(x / 34) + Math.floor(y / 22)) % 3 == 0, ang = up ? -62 : 11, len = (i < 2500 ? 14 : 9) + rnd() * 4;
    if (!free(x, y, len, ang)) continue;
    placed.push([x, y, len, ang, 3.6]);
    W.push([words[i % words.length], x, y, len, ang, 3.7, pal[(i * 5) % pal.length]]);
    n++;
  }
  put('skills', T(447, 419, 'skills', 5, '#333', 'start', 0, 13, 500) + W.map(w => `<text transform="translate(${w[1]} ${w[2]}) rotate(${w[4]})" y="${w[5] * .36}" text-anchor="middle" font-size="${w[5]}" fill="${w[6]}" textLength="${w[3]}" lengthAdjust="spacingAndGlyphs">${w[0]}</text>`).join(''));
}

// Offers by day
{
  let s = T(447, 533, 'total_offres par Mois et Jour', 5.2, '#333', 'start', 0, 67, 500);
  [[553,'200'],[581.5,'100'],[609.5,'0']].forEach(([y, t]) => s += L(464, y, 838, y, '#ececec', '1 2') + T(461, y + 1.5, t, 4, '#777', 'end'));
  s += '<polyline points="494.500,608 573,606.700 651.500,555 730,609 808.500,548" fill="none" stroke="#3a9df5" stroke-width="1.100"/>';
  [[494.5,'28'],[573,'8'],[651.5,'12'],[730,'21'],[808.5,'28']].forEach(q => s += T(q[0], 615, q[1], 4, '#777', 'middle'));
  s += T(494.5, 620, 'février', 4, '#777', 'middle', 0, 11) + T(690.5, 620, 'mars', 4, '#777', 'middle', 0, 8) + T(651.5, 627.5, 'Jour', 4.4, '#333', 'middle', 0, 9, 500) + L(534, 611, 534, 621, '#ddd');
  s += T(451.5, 586, 'total_offres', 4.2, '#333', 'start', -90, 23, 500);
  put('days', s);
}

// Tune letter spacing so that labels keep the widths of the interface font.
function fit() {
  if (getComputedStyle(document.body).overflow !== 'hidden') return;
  document.querySelectorAll('[data-w],[data-h]').forEach(e => {
    e.style.letterSpacing = '0px';
    const r = document.createRange(); r.selectNodeContents(e);
    const b = r.getBoundingClientRect();
    const d = e.dataset.w ? e.dataset.w - b.width : e.dataset.h - b.height;
    e.style.letterSpacing = (d / e.textContent.length).toFixed(3) + 'px';
  });
}
fit();
addEventListener('load', fit);
requestAnimationFrame(() => requestAnimationFrame(fit));
[0, 30, 100, 250].forEach(t => setTimeout(fit, t));
new MutationObserver(fit).observe(document.head, { childList: true, subtree: true });
</script>
</body>
</html>
